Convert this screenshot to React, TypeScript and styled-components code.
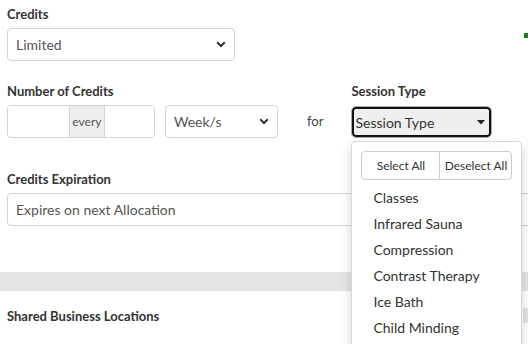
import React from 'react';
import styled, { createGlobalStyle } from 'styled-components';

const GlobalStyle = createGlobalStyle`
  html {
    overflow: hidden;
  }
  body {
    margin: 0;
    padding: 0;
    background: #fff;
    font-family: Lato, "Open Sans", Arial, sans-serif;
    color: #333;
  }
`;

const Page = styled.div`
  position: relative;
  width: 570px;
  min-height: 344px;
  box-sizing: border-box;
  padding: 5px 7px 0;
`;

const TopRow = styled.div`
  display: flex;
  align-items: flex-start;
`;

const Group = styled.div<{ $width?: number; $top?: number }>`
  display: flex;
  flex-direction: column;
  width: ${(p) => (p.$width ? `${p.$width}px` : 'auto')};
  margin-top: ${(p) => p.$top ?? 0}px;
`;

const Label = styled.label`
  font-size: 13px;
  font-weight: 700;
  line-height: 18px;
  color: #333;
  margin-bottom: 5px;
  white-space: nowrap;
`;

const Select = styled.div<{ $width?: number }>`
  display: flex;
  align-items: center;
  justify-content: space-between;
  box-sizing: border-box;
  width: ${(p) => (p.$width ? `${p.$width}px` : '100%')};
  height: 33px;
  padding: 0 8px;
  border: 1px solid #d4d4d4;
  border-radius: 4px;
  background: #fff;
  font-size: 14px;
  color: #555;
`;

const GreenMark = styled.div`
  width: 4px;
  height: 5px;
  margin-left: 289px;
  margin-top: 28px;
  background: #1c7d1c;
`;

const Row = styled.div`
  display: flex;
  align-items: flex-start;
  margin-top: 21px;
`;

const InputGroup = styled.div`
  display: flex;
  width: 148px;
  height: 33px;
  box-sizing: border-box;
  border: 1px solid #d4d4d4;
  border-radius: 4px;
  overflow: hidden;
`;

const Field = styled.div<{ $width: number }>`
  width: ${(p) => p.$width}px;
  background: #fff;
`;

const Addon = styled.div`
  display: flex;
  align-items: center;
  justify-content: center;
  width: 34px;
  background: #eeeeee;
  border-left: 1px solid #d4d4d4;
  border-right: 1px solid #d4d4d4;
  font-size: 12px;
  color: #555;
`;

const WeekCol = styled.div`
  margin-left: 10px;
  padding-top: 23px;
`;

const ForText = styled.span`
  font-size: 13px;
  color: #444;
  margin: 31px 28px 0 29px;
`;

const SessionCol = styled.div`
  position: relative;
  display: flex;
  flex-direction: column;
`;

const SessionButton = styled.div`
  display: flex;
  align-items: center;
  justify-content: space-between;
  box-sizing: border-box;
  width: 141px;
  height: 32px;
  margin-top: 1px;
  padding: 0 6px 0 3px;
  border: 1px solid #a9a9a9;
  border-radius: 5px;
  box-shadow: inset 0 0 0 2px #111;
  background: #efefef;
  font-size: 14px;
  color: #333;
`;

const Menu = styled.div`
  position: absolute;
  top: 59px;
  left: 0;
  width: 171px;
  height: 230px;
  box-sizing: border-box;
  padding: 9px 9px 0;
  background: #fff;
  border: 1px solid #d9d9d9;
  border-radius: 4px;
  box-shadow: 0 6px 12px rgba(0, 0, 0, 0.18);
  z-index: 2;
`;

const ButtonGroup = styled.div`
  display: flex;
  height: 29px;
  box-sizing: border-box;
  border: 1px solid #ccc;
  border-radius: 4px;
  margin-bottom: 5px;
`;

const GroupButton = styled.div<{ $divider?: boolean }>`
  flex: ${(p) => (p.$divider ? '0 0 77px' : '1')};
  display: flex;
  align-items: center;
  justify-content: center;
  font-size: 12px;
  color: #333;
  border-right: ${(p) => (p.$divider ? '1px solid #ccc' : 'none')};
`;

const MenuItem = styled.div`
  height: 26px;
  line-height: 26px;
  padding-left: 12px;
  font-size: 14px;
  color: #333;
  white-space: nowrap;
`;

const Band = styled.div`
  height: 19px;
  margin: 46px -7px 0;
  background: #e5e5e5;
`;

const SharedRow = styled.div`
  display: flex;
  justify-content: space-between;
  align-items: flex-start;
  margin-top: 16px;
`;

const SideBlock = styled.div`
  width: 40px;
  height: 15px;
  margin-top: 1px;
  background: #e5e5e5;
`;

const Chevron = () => (
  <svg width="10" height="7" viewBox="0 0 10 7">
    <path d="M1.2 1.3 L5 5 L8.8 1.3" fill="none" stroke="#333" strokeWidth="2" />
  </svg>
);

const Caret = () => (
  <svg width="8" height="5" viewBox="0 0 8 5">
    <path d="M0 0 H8 L4 4.5 Z" fill="#222" />
  </svg>
);

const sessionTypes = ['Classes', 'Infrared Sauna', 'Compression', 'Contrast Therapy', 'Ice Bath', 'Child Minding'];

export default function App() {
  return (
    <>
      <GlobalStyle />
      <Page>
        <TopRow>
          <Group $width={228}>
            <Label>Credits</Label>
            <Select>
              Limited
              <Chevron />
            </Select>
          </Group>
          <GreenMark />
        </TopRow>

        <Row>
          <Group>
            <Label>Number of Credits</Label>
            <InputGroup>
              <Field $width={62} />
              <Addon>every</Addon>
              <Field $width={50} />
            </InputGroup>
          </Group>
          <WeekCol>
            <Select $width={113}>
              Week/s
              <Chevron />
            </Select>
          </WeekCol>
          <ForText>for</ForText>
          <SessionCol>
            <Label>Session Type</Label>
            <SessionButton>
              Session Type
              <Caret />
            </SessionButton>
            <Menu>
              <ButtonGroup>
                <GroupButton $divider>Select All</GroupButton>
                <GroupButton>Deselect All</GroupButton>
              </ButtonGroup>
              {sessionTypes.map((t) => (
                <MenuItem key={t}>{t}</MenuItem>
              ))}
            </Menu>
          </SessionCol>
        </Row>

        <Group $top={32}>
          <Label>Credits Expiration</Label>
          <Select>Expires on next Allocation</Select>
        </Group>

        <Band />

        <SharedRow>
          <Label>Shared Business Locations</Label>
          <SideBlock />
        </SharedRow>
      </Page>
    </>
  );
}
